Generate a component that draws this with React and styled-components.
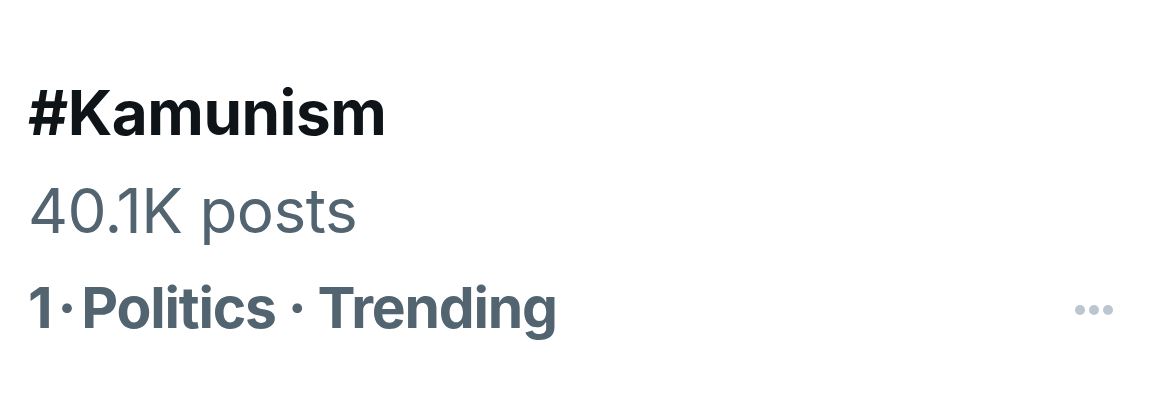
import styled, { createGlobalStyle } from "styled-components"

const Global = createGlobalStyle`
  html, body {
    margin: 0;
    padding: 0;
    background: #ffffff;
  }
  body {
    font-family: Inter, "Liberation Sans", sans-serif;
  }
`;

const Trend = styled.div`
  width: 1170px;
  height: 400px;
  box-sizing: border-box;
  padding: 78px 56px 0 28px;
  display: flex;
  flex-direction: column;
`;

const Title = styled.div`
  font-size: 62px;
  font-weight: 700;
  color: #0f1419;
  line-height: 70px;
  letter-spacing: -0.5px;
`;

const Count = styled.div`
  margin-top: 28px;
  font-size: 62px;
  font-weight: 400;
  color: #536471;
  line-height: 70px;
  letter-spacing: -0.5px;
`;

const Meta = styled.div`
  margin-top: 27px;
  display: flex;
  align-items: center;
  justify-content: space-between;
`;

const MetaText = styled.span`
  font-size: 57px;
  font-weight: 700;
  color: #536471;
  line-height: 70px;
  letter-spacing: -1.2px;
`;

const Sep = styled.span`
  margin: 0 ${p => p.$gap}px;
`;

const More = styled.svg`
  width: 40px;
  height: 12px;
  fill: #bcc6d0;
  margin-top: 4px;
`;

export default function App() {
  return (
    <>
      <Global />
      <Trend>
        <Title>#Kamunism</Title>
        <Count>40.1K posts</Count>
        <Meta>
          <MetaText>
            1<Sep $gap={6}>·</Sep>Politics<Sep $gap={12}>·</Sep>Trending
          </MetaText>
          <More viewBox="0 0 40 12">
            <circle cx="6" cy="6" r="5" />
            <circle cx="20" cy="6" r="5" />
            <circle cx="34" cy="6" r="5" />
          </More>
        </Meta>
      </Trend>
    </>
  )
}
